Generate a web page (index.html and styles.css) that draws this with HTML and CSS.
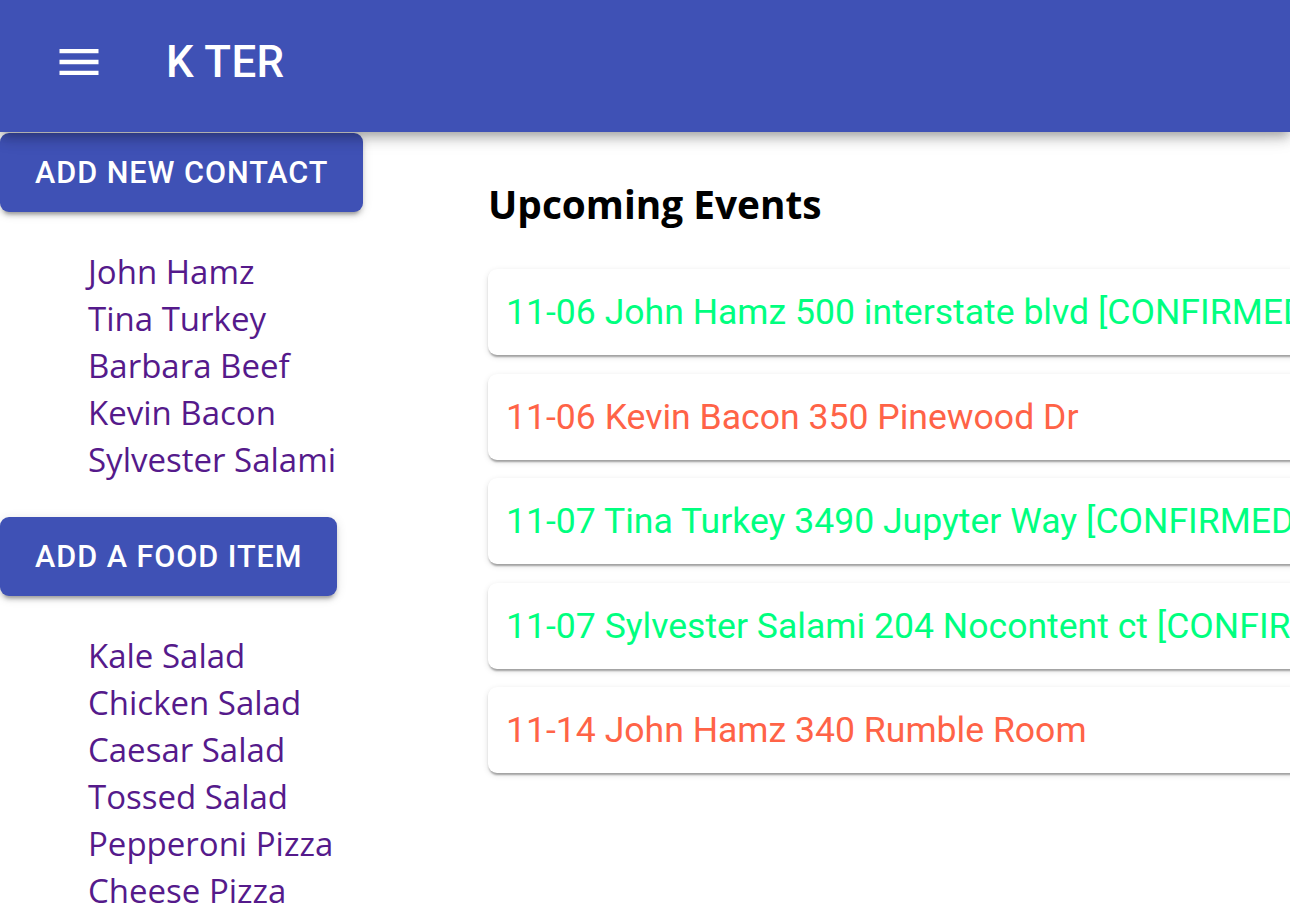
FILE: index.html
```html
<!DOCTYPE html>
<html>
<head>
<meta charset="utf-8">
<title>K TER</title>
<link rel="stylesheet" href="styles.css">
</head>
<body>
<header class="appbar">
  <button class="menu-btn" aria-label="menu">
    <svg viewBox="0 0 24 24" width="52" height="52"><path fill="#fff" d="M3 18h18v-2H3v2zm0-5h18v-2H3v2zm0-7v2h18V6H3z"/></svg>
  </button>
  <h1 class="title">K TER</h1>
</header>
<main class="layout">
  <aside class="sidebar">
    <button class="action-btn">Add New Contact</button>
    <ul class="item-list">
      <li>John Hamz</li>
      <li>Tina Turkey</li>
      <li>Barbara Beef</li>
      <li>Kevin Bacon</li>
      <li>Sylvester Salami</li>
    </ul>
    <button class="action-btn">Add a Food Item</button>
    <ul class="item-list">
      <li>Kale Salad</li>
      <li>Chicken Salad</li>
      <li>Caesar Salad</li>
      <li>Tossed Salad</li>
      <li>Pepperoni Pizza</li>
      <li>Cheese Pizza</li>
    </ul>
  </aside>
  <section class="events">
    <h2 class="events-title">Upcoming Events</h2>
    <div class="event-list">
      <div class="event confirmed">11-06 John Hamz 500 interstate blvd [CONFIRMED]</div>
      <div class="event pending">11-06 Kevin Bacon 350 Pinewood Dr</div>
      <div class="event confirmed">11-07 Tina Turkey 3490 Jupyter Way [CONFIRMED]</div>
      <div class="event confirmed">11-07 Sylvester Salami 204 Nocontent ct [CONFIRMED]</div>
      <div class="event pending">11-14 John Hamz 340 Rumble Room</div>
    </div>
  </section>
</main>
</body>
</html>
```

FILE: styles.css
```css
html, body {
  margin: 0;
  padding: 0;
  background: #fff;
  overflow: hidden;
}
body {
  font-family: "Open Sans", "Noto Sans", sans-serif;
  width: 1290px;
  height: 907px;
}
.appbar {
  position: relative;
  z-index: 2;
  height: 132px;
  background: #3f51b5;
  display: flex;
  align-items: center;
  padding-left: 26px;
  box-shadow: 0 4px 9px -2px rgba(0,0,0,0.2), 0 8px 11px 0 rgba(0,0,0,0.14), 0 2px 22px 0 rgba(0,0,0,0.12);
}
.menu-btn {
  border: 0;
  background: transparent;
  padding: 26px;
  margin: -8px 35px 0 1px;
  display: flex;
}
.title {
  margin: 0;
  margin-top: -8px;
  color: #fff;
  font-family: Roboto, sans-serif;
  font-weight: 500;
  font-size: 43.8px;
  letter-spacing: 0.4px;
}
.layout {
  display: flex;
}
.sidebar {
  width: 488px;
  flex: none;
}
.action-btn {
  display: block;
  border: 0;
  background: #3f51b5;
  color: #fff;
  font-family: Roboto, sans-serif;
  font-weight: 500;
  font-size: 30.6px;
  letter-spacing: 0.95px;
  text-transform: uppercase;
  padding: 0 35px;
  height: 79px;
  margin-top: 1px;
  border-radius: 9px;
  box-shadow: 0 6px 3px -4px rgba(0,0,0,0.2), 0 4px 4px 0 rgba(0,0,0,0.14), 0 2px 11px 0 rgba(0,0,0,0.12);
}
.item-list {
  list-style: none;
  margin: 36px 0 34px;
  padding-left: 88px;
  color: #551a8b;
  font-size: 33px;
  line-height: 47px;
}
.events {
  flex: 1;
  min-width: 0;
}
.events-title {
  margin: 46px 0 39px;
  font-size: 38.8px;
  font-weight: 700;
  line-height: 52px;
  color: #000;
  white-space: nowrap;
}
.event-list {
  display: flex;
  flex-direction: column;
  gap: 18.5px;
  margin-right: -400px;
}
.event {
  font-family: Roboto, sans-serif;
  font-size: 35.6px;
  line-height: 52px;
  padding: 17px 18px;
  border-radius: 9px;
  background: #fff;
  white-space: nowrap;
  box-shadow: 0 4px 2px -2px rgba(0,0,0,0.2), 0 2px 2px 0 rgba(0,0,0,0.14), 0 2px 6px 0 rgba(0,0,0,0.12);
}
.confirmed { color: #00ff7f; }
.pending { color: #ff6347; }
```
